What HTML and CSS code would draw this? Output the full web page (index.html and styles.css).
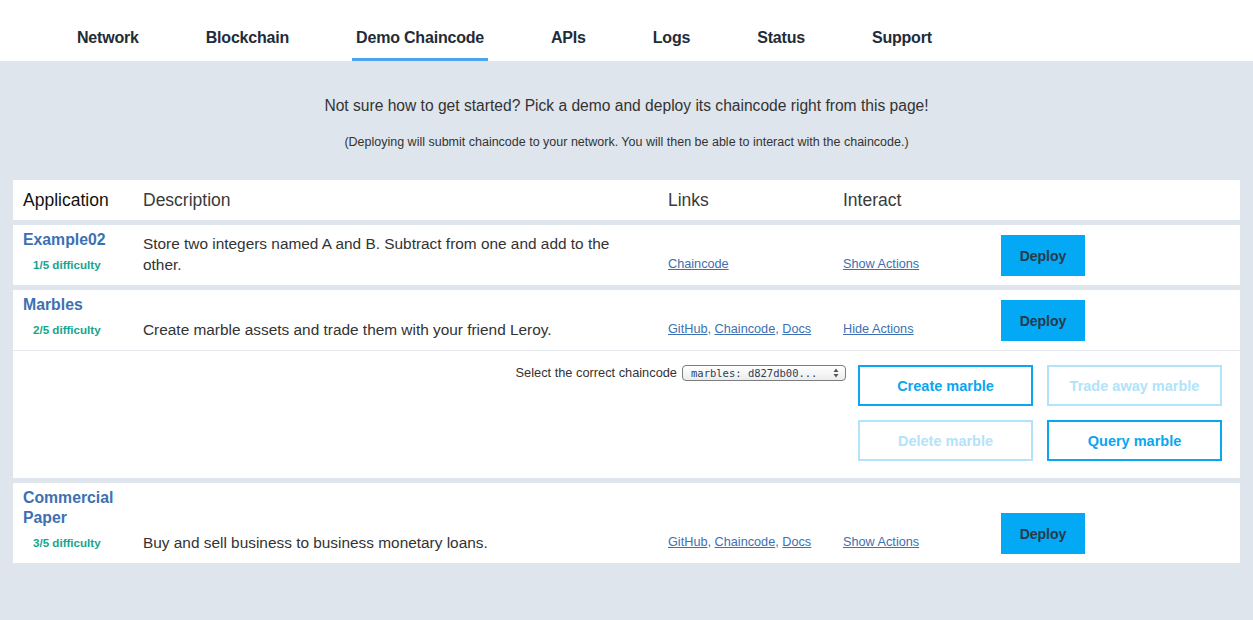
FILE: index.html
```html
<!DOCTYPE html>
<html>
<head>
<meta charset="utf-8">
<link rel="stylesheet" href="styles.css">
</head>
<body>
<nav class="topnav">
  <a class="nav-item">Network</a>
  <a class="nav-item">Blockchain</a>
  <a class="nav-item active">Demo Chaincode</a>
  <a class="nav-item">APIs</a>
  <a class="nav-item">Logs</a>
  <a class="nav-item">Status</a>
  <a class="nav-item">Support</a>
</nav>

<section class="intro">
  <p class="intro-main">Not sure how to get started? Pick a demo and deploy its chaincode right from this page!</p>
  <p class="intro-note">(Deploying will submit chaincode to your network. You will then be able to interact with the chaincode.)</p>
</section>

<section class="demos">
  <div class="row head">
    <div class="cell app-h">Application</div>
    <div class="cell">Description</div>
    <div class="cell">Links</div>
    <div class="cell">Interact</div>
    <div class="cell"></div>
  </div>

  <div class="row item">
    <div class="cell app">
      <div class="app-name">Example02</div>
      <div class="difficulty">1/5 difficulty</div>
    </div>
    <div class="cell desc">Store two integers named A and B. Subtract from one and add to the other.</div>
    <div class="cell links"><a>Chaincode</a></div>
    <div class="cell links"><a>Show Actions</a></div>
    <div class="cell deploy-cell"><button class="deploy">Deploy</button></div>
  </div>

  <div class="group">
    <div class="row item">
      <div class="cell app">
        <div class="app-name">Marbles</div>
        <div class="difficulty">2/5 difficulty</div>
      </div>
      <div class="cell desc">Create marble assets and trade them with your friend Leroy.</div>
      <div class="cell links"><a>GitHub</a>, <a>Chaincode</a>, <a>Docs</a></div>
      <div class="cell links"><a>Hide Actions</a></div>
      <div class="cell deploy-cell"><button class="deploy">Deploy</button></div>
    </div>
    <div class="actions">
      <div class="picker">
        <span class="picker-label">Select the correct chaincode</span>
        <span class="select">marbles: d827db00...<span class="arrows"><svg width="6" height="10" viewBox="0 0 6 10"><path d="M3 0.5 L5.5 4 H0.5 Z M3 9.5 L5.5 6 H0.5 Z" fill="#555"/></svg></span></span>
      </div>
      <div class="action-grid">
        <button class="act">Create marble</button>
        <button class="act off">Trade away marble</button>
        <button class="act off">Delete marble</button>
        <button class="act">Query marble</button>
      </div>
    </div>
  </div>

  <div class="row item tall">
    <div class="cell app">
      <div class="app-name">Commercial Paper</div>
      <div class="difficulty">3/5 difficulty</div>
    </div>
    <div class="cell desc">Buy and sell business to business monetary loans.</div>
    <div class="cell links"><a>GitHub</a>, <a>Chaincode</a>, <a>Docs</a></div>
    <div class="cell links"><a>Show Actions</a></div>
    <div class="cell deploy-cell"><button class="deploy">Deploy</button></div>
  </div>
</section>
</body>
</html>
```

FILE: styles.css
```css
html, body {
  margin: 0;
  padding: 0;
}
body {
  background: #dfe5ec;
  font-family: "Liberation Sans", Arial, sans-serif;
  color: #333;
  min-height: 620px;
}

.topnav {
  background: #fff;
  height: 61px;
  display: flex;
  align-items: stretch;
  padding-left: 73px;
  gap: 59px;
  box-sizing: border-box;
}
.nav-item {
  display: flex;
  align-items: flex-end;
  padding: 0 4px 11px;
  font-size: 16px;
  font-weight: bold;
  line-height: 19px;
  color: #1f2c39;
  letter-spacing: -0.2px;
  border-bottom: 3px solid transparent;
}
.nav-item.active {
  border-bottom-color: #4aa6ef;
}

.intro {
  text-align: center;
  padding-top: 34px;
  padding-bottom: 30px;
}
.intro p { margin: 0; }
.intro-main {
  font-size: 15.6px;
  line-height: 22px;
  color: #333;
}
.intro-note {
  margin-top: 17px !important;
  font-size: 12.5px;
  line-height: 16px;
  color: #333;
}

.demos {
  margin: 0 13px;
  display: flex;
  flex-direction: column;
  gap: 5px;
}

.row {
  display: grid;
  grid-template-columns: 130px 525px 175px 158px 1fr;
  background: #fff;
}
.row.head {
  height: 40px;
  align-items: center;
  font-size: 17.5px;
  color: #3a3a3a;
}
.row.head .cell:first-child { padding-left: 10px; }
.app-h { color: #111; }

.row.item {
  align-items: end;
  padding: 5px 0 10px;
  min-height: 60px;
  box-sizing: border-box;
}
.app {
  padding-left: 10px;
}
.app-name {
  font-size: 15.8px;
  font-weight: bold;
  line-height: 20px;
  color: #3d70b2;
  width: 100px;
}
.difficulty {
  margin-top: 5px;
  font-size: 11.6px;
  font-weight: bold;
  line-height: 20px;
  color: #15a58c;
  padding-left: 10px;
}
.desc {
  font-size: 15.4px;
  line-height: 21px;
  padding-right: 42px;
  color: #333;
}
.links {
  font-size: 12.7px;
  line-height: 21px;
  color: #3d70b2;
}
.links a {
  color: #3d70b2;
  text-decoration: underline;
}
.deploy-cell {
  display: flex;
  align-items: flex-end;
}
.deploy {
  width: 84px;
  height: 41px;
  border: none;
  background: #03a9f4;
  color: #26394a;
  font-family: "Liberation Sans", Arial, sans-serif;
  font-size: 14px;
  font-weight: bold;
  margin-bottom: -1px;
}

.group {
  background: #fff;
}
.actions {
  border-top: 1px solid #e3e6ea;
  display: flex;
  justify-content: flex-end;
  align-items: flex-start;
  padding: 14px 18px 17px 0;
}
.picker {
  display: flex;
  align-items: center;
  margin-right: 12px;
}
.picker-label {
  font-size: 12.8px;
  color: #333;
  margin-right: 5px;
  position: relative;
  top: -1px;
}
.select {
  display: inline-flex;
  align-items: center;
  justify-content: space-between;
  width: 164px;
  height: 16px;
  box-sizing: border-box;
  border: 1px solid #7d7d7d;
  border-radius: 4px;
  background: linear-gradient(#ffffff, #ececec);
  font-family: "DejaVu Sans Mono", monospace;
  font-size: 10.5px;
  color: #2a3f5a;
  padding: 0 6px 0 8px;
}
.arrows {
  display: flex;
  align-items: center;
}

.action-grid {
  display: grid;
  grid-template-columns: 175px 175px;
  grid-auto-rows: 41px;
  gap: 14px;
}
.act {
  border: 2px solid #0aa6ef;
  background: #fff;
  color: #0aa6ef;
  font-family: "Liberation Sans", Arial, sans-serif;
  font-size: 14.5px;
  font-weight: bold;
}
.act.off {
  border-color: #b2e3fa;
  color: #b2e3fa;
}
```
